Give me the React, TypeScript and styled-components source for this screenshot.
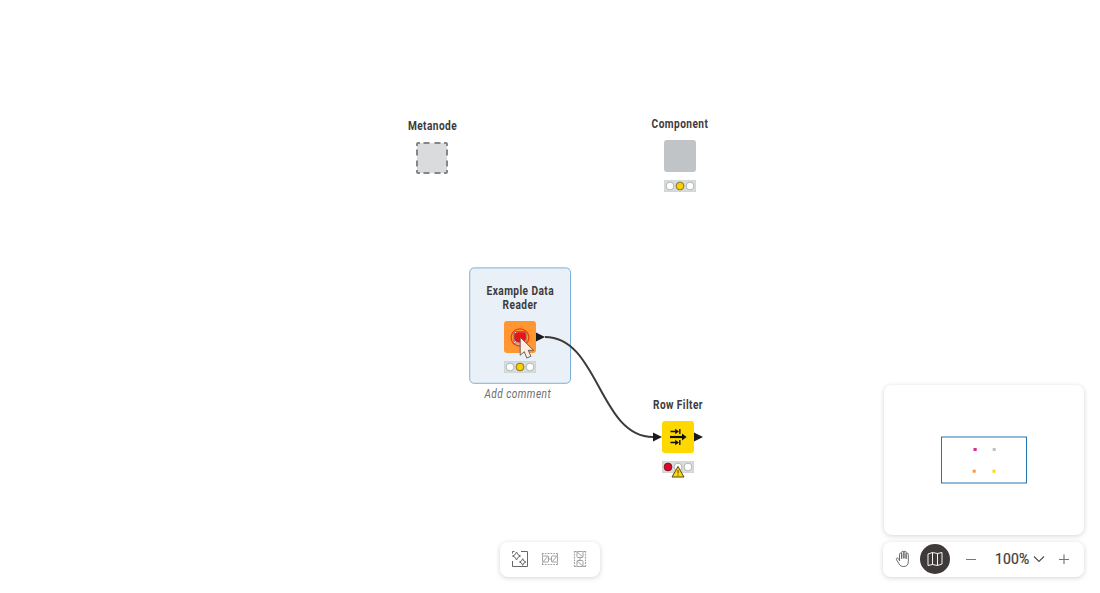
import React from "react";
import styled, { createGlobalStyle, css } from "styled-components";

const GlobalStyle = createGlobalStyle`
  * { box-sizing: border-box; }
  html, body { margin: 0; background: #fff; overflow: hidden; }
  body { font-family: Roboto, "Liberation Sans", sans-serif; color: #3e3a39; }
  svg { display: block; }
`;

const Workspace = styled.main`
  position: relative;
  width: 1100px;
  height: 593px;
  overflow: hidden;
  background: #fff;
`;

const Connections = styled.svg`
  position: absolute;
  inset: 0;
`;

const NodeBox = styled.div<{ $x: number; $y: number }>`
  position: absolute;
  left: ${(p) => p.$x}px;
  top: ${(p) => p.$y}px;
  width: 100px;
  display: flex;
  flex-direction: column;
  align-items: center;
`;

const Label = styled.div`
  display: flex;
  flex-direction: column;
  align-items: center;
  height: 14px;
  justify-content: flex-end;
  margin-bottom: 9px;
`;

const Line = styled.span<{ $comment?: boolean }>`
  white-space: nowrap;
  font-size: 12px;
  line-height: 14px;
  font-weight: 700;
  letter-spacing: 0.5px;
  flex: none;
  transform: translateX(0.4px) scaleX(0.845);
  ${(p) =>
    p.$comment &&
    css`
      font-weight: 400;
      font-style: italic;
      color: #6e6e6e;
    `}
`;

const Torso = styled.div<{ $color: string }>`
  width: 32px;
  height: 32px;
  border-radius: 3px;
  background: ${(p) => p.$color};
`;

const TrafficLight = styled.svg`
  margin-top: 8px;
`;

const Warning = styled.svg`
  position: absolute;
  left: 43px;
  top: 67px;
`;

const Comment = styled.div`
  position: absolute;
  left: 467px;
  top: 387px;
  width: 100px;
  display: flex;
  justify-content: center;
`;

const Cursor = styled.svg`
  position: absolute;
  left: 519px;
  top: 336px;
`;

const Panel = styled.div`
  background: #fff;
  border-radius: 8px;
  box-shadow: 0 1px 5px rgba(62, 58, 57, 0.22);
`;

const CanvasTools = styled(Panel)`
  position: absolute;
  left: 500px;
  top: 542px;
  width: 100px;
  height: 35px;
  padding-bottom: 1px;
  display: flex;
  align-items: center;
  justify-content: center;
  gap: 12px;
`;

const Dock = styled.aside`
  position: absolute;
  right: 16px;
  bottom: 16px;
  width: 201px;
  display: flex;
  flex-direction: column;
  align-items: flex-end;
  gap: 7px;
`;

const MiniMap = styled(Panel)`
  width: 200px;
  height: 150px;
`;

const ZoomBar = styled(Panel)`
  width: 201px;
  height: 35px;
  padding: 0 11px 1px 11px;
  display: flex;
  align-items: center;
`;

const RoundButton = styled.button`
  width: 30px;
  height: 30px;
  margin-left: 8px;
  padding: 0;
  border: 0;
  border-radius: 50%;
  background: #3e3a39;
  display: grid;
  place-items: center;
`;

const IconButton = styled.button`
  width: 18px;
  height: 18px;
  padding: 0;
  border: 0;
  background: none;
  display: grid;
  place-items: center;
`;

const Minus = styled(IconButton)`
  margin-left: 12px;
`;

const ZoomValue = styled.span`
  margin-left: 15px;
  width: 34px;
  font-size: 14px;
  font-weight: 400;
  letter-spacing: 0.15px;
  line-height: 18px;
  color: #3e3a39;
  -webkit-text-stroke: 0.2px #3e3a39;
`;

const Chevron = styled(IconButton)`
  width: 12px;
  margin-left: 4px;
  margin-right: 10px;
`;

const STATUS = {
  idle: { color: "#d20f2a", edge: "#8d0b1c" },
  configured: { color: "#f9d100", edge: "#756a28" },
};

function Status({ state }: { state: "idle" | "configured" }) {
  const on = STATUS[state];
  const index = state === "idle" ? 0 : 1;
  return (
    <TrafficLight width="32" height="12" viewBox="0 0 32 12">
      <rect x="0.25" y="0.25" width="31.5" height="11.5" fill="#d8dcdd" stroke="#c5c9ca" strokeWidth="0.5" />
      {[0, 1, 2].map((i) => (
        <circle key={i} cx={6 + i * 10} cy="6" r="3.9" fill={i === index ? on.color : "#fff"} stroke={i === index ? on.edge : "#a9adae"} strokeWidth="0.9" />
      ))}
    </TrafficLight>
  );
}

function RowFilterIcon() {
  return (
    <svg width="32" height="32" viewBox="0 0 32 32" fill="none" stroke="#111">
      <path d="M8 16h13" strokeWidth="2.2" />
      <path d="M20 12.4 24.6 16 20 19.6z" fill="#111" stroke="none" />
      <path d="M8.500 10.500h6M8.500 21.500h6M17.800 8v5M17.800 19v5" strokeWidth="1.400" />
      <path d="M13.200 7.800 17 10.500 13.200 13.200zM13.200 18.800 17 21.500 13.200 24.200z" fill="#111" stroke="none" />
    </svg>
  );
}

function ReaderIcon() {
  return (
    <svg width="32" height="32" viewBox="0 0 32 32" fill="none">
      <rect x="9.500" y="10" width="13" height="14" rx="2" fill="#86706a" />
      <path d="M10.500 20c0-2 1-3 1-3h9s1.500 1 1.500 4l-1.500 3H11.500z" fill="#d9a08c" />
      <path d="M10.500 17c-.5-6 2.500-6.500 5.500-6.500s6 0 6 6c0 4-3 5-6 5s-5.200-.5-5.500-4.500z" fill="#e8141a" />
      <path d="M12 11.800c2-1.200 5-1.200 7.600-.2" stroke="#ef5a48" strokeWidth="0.900" />
      <path d="M10.500 10.500 12 12M9.800 22l1.700-1.500" stroke="#eee" strokeWidth="1" />
      <ellipse cx="16" cy="16.500" rx="8.900" ry="8.700" stroke="#f5380a" strokeWidth="1.200" />
    </svg>
  );
}

function ArrangeIcon() {
  return (
    <svg width="18" height="18" viewBox="0 0 18 18" fill="none" stroke="#6b6766">
      <path d="M1.500 11v5.500h15v-15H10M1.500 3.500v-2h2" />
      <path d="M5.500 2q.8 3.200 4 4-3.200.8-4 4-.8-3.200-4-4 3.200-.8 4-4zM11.700 8.700q.6 2.700 3.200 3.300-2.600.6-3.200 3.300-.6-2.700-3.200-3.300 2.600-.6 3.200-3.300z" />
    </svg>
  );
}

function GroupIcon({ vertical }: { vertical?: boolean }) {
  return (
    <svg width="18" height="18" viewBox="0 0 18 18" fill="none" stroke="#a3a1a0">
      <g transform={vertical ? "rotate(90 9 9)" : undefined}>
        <path d="M1 3.500h16M1 14.500h16" strokeWidth="1.200" strokeDasharray="1.800 1" />
        <path d="M1.500 4v10M16.500 4v10" strokeDasharray="1.800 1" />
        <rect x="1.500" y="6" width="6" height="6" rx="0.800" />
        <rect x="10.500" y="6" width="6" height="6" rx="0.800" />
        <path d="M7.200 9h3.600M2 11.800l5-5.600M11 11.800l5-5.600" />
      </g>
    </svg>
  );
}

function HandIcon() {
  return (
    <svg width="18" height="18" viewBox="0 0 18 18" fill="none" stroke="#5f5b5a" strokeWidth="0.900" strokeLinecap="round" strokeLinejoin="round">
      <path d="M5.500 10.500V4.200a1.100 1.100 0 0 1 2.200 0V8.500M7.700 8V2.300a1.100 1.100 0 0 1 2.200 0V8M9.900 8V2.300a1.100 1.100 0 0 1 2.200 0v6M12.100 8.500V4.200a1.100 1.100 0 0 1 2.200 0v7.300c0 3.200-1.500 5-4.500 5-2.500 0-3.600-.8-4.800-2.700L2.500 9.600c-.8-1.200.8-2.300 1.700-1.200L5.500 10.200" />
    </svg>
  );
}

function MapIcon() {
  return (
    <svg width="16" height="16" viewBox="0 0 16 16" fill="none" stroke="#fff" strokeWidth="0.950" strokeLinejoin="round">
      <path d="M1 3 5.500 1.500l5 1L15 1.500V13l-4.500 1.500-5-1L1 14.500zM5.500 1.500v12M10.500 2.500v12" />
    </svg>
  );
}

export default function App() {
  return (
    <>
      <GlobalStyle />
      <Workspace>
        <Connections width="1100" height="593" fill="none">
          <rect x="469.700" y="267.900" width="100.800" height="115.400" rx="4.500" fill="#e9f0f7" stroke="#7db0d6" />
        </Connections>
        <NodeBox $x={382} $y={119}>
          <Label><Line>Metanode</Line></Label>
          <svg width="32" height="32" viewBox="0 0 32 32">
            <rect x="1" y="1" width="30" height="30" rx="1" fill="#d9dbdd" />
            <g fill="none" stroke="#858687" strokeWidth="2">
              <path d="M1 4V2q0-1 1-1h2M28 1h2q1 0 1 1v2M31 28v2q0 1-1 1h-2M4 31H2q-1 0-1-1v-2" />
              <path d="M7.500 1h6M18.500 1h6M7.500 31h6M18.500 31h6M1 7.500v6M1 18.500v6M31 7.500v6M31 18.500v6" />
            </g>
          </svg>
        </NodeBox>
        <NodeBox $x={630} $y={117}>
          <Label><Line>Component</Line></Label>
          <Torso $color="#c0c4c7" />
          <Status state="configured" />
        </NodeBox>
        <NodeBox $x={470} $y={298}>
          <Label>
            <Line>Example Data</Line>
            <Line>Reader</Line>
          </Label>
          <Torso $color="#ff9632"><ReaderIcon /></Torso>
          <Status state="configured" />
        </NodeBox>
        <NodeBox $x={628} $y={398}>
          <Label><Line>Row Filter</Line></Label>
          <Torso $color="#ffd800"><RowFilterIcon /></Torso>
          <Status state="idle" />
          <Warning width="14" height="13" viewBox="0 0 14 13">
            <path d="M7 1.500 13 12H1z" fill="#ffd800" stroke="#4c4428" strokeLinejoin="round" />
            <path d="M7 5v3.500M7 9.500v1.200" stroke="#4c4428" />
          </Warning>
        </NodeBox>
        <Comment><Line $comment>Add comment</Line></Comment>
        <Connections width="1100" height="593" fill="none">
          <path d="M545 337C599 337 599 437 653 437" stroke="#3e3a39" strokeWidth="2" />
          <path d="M536 332.500 545 337 536 341.500zM653 432.500 662 437 653 441.500zM694 432.500 703 437 694 441.500z" fill="#1b1a1a" />
        </Connections>
        <Cursor width="17" height="24" viewBox="0 0 17 24">
          <path d="M1.200 1.200v18l4.100-3.500 2.500 6.300 4.100-1.700-2.600-6h5.200z" fill="#ffeee0" stroke="#5b5350" strokeWidth="0.900" />
        </Cursor>

        <CanvasTools>
          <IconButton><ArrangeIcon /></IconButton>
          <IconButton><GroupIcon /></IconButton>
          <IconButton><GroupIcon vertical /></IconButton>
        </CanvasTools>

        <Dock>
          <MiniMap>
            <svg width="200" height="150" viewBox="884 385 200 150">
              <rect x="941.500" y="437" width="85" height="46" fill="none" stroke="#2276b2" />
              <rect x="973.500" y="448" width="3.200" height="3" fill="#d6308e" />
              <rect x="992.700" y="448" width="3" height="3" fill="#c0c0c0" />
              <rect x="972.700" y="469.700" width="3" height="3" fill="#ff9632" />
              <rect x="992.500" y="469.700" width="3" height="3" fill="#ffd800" />
            </svg>
          </MiniMap>
          <ZoomBar>
            <IconButton><HandIcon /></IconButton>
            <RoundButton><MapIcon /></RoundButton>
            <Minus><svg width="10" height="10" stroke="#777"><path d="M0 5.500h10" /></svg></Minus>
            <ZoomValue>100%</ZoomValue>
            <Chevron><svg width="12" height="8" fill="none" stroke="#4f4b4a" strokeWidth="1.1"><path d="m1 1.500 5 5 5-5" /></svg></Chevron>
            <IconButton><svg width="10" height="10" stroke="#777"><path d="M0 5.500h10M5 0.500v10" strokeWidth="1.2" /></svg></IconButton>
          </ZoomBar>
        </Dock>
      </Workspace>
    </>
  );
}
